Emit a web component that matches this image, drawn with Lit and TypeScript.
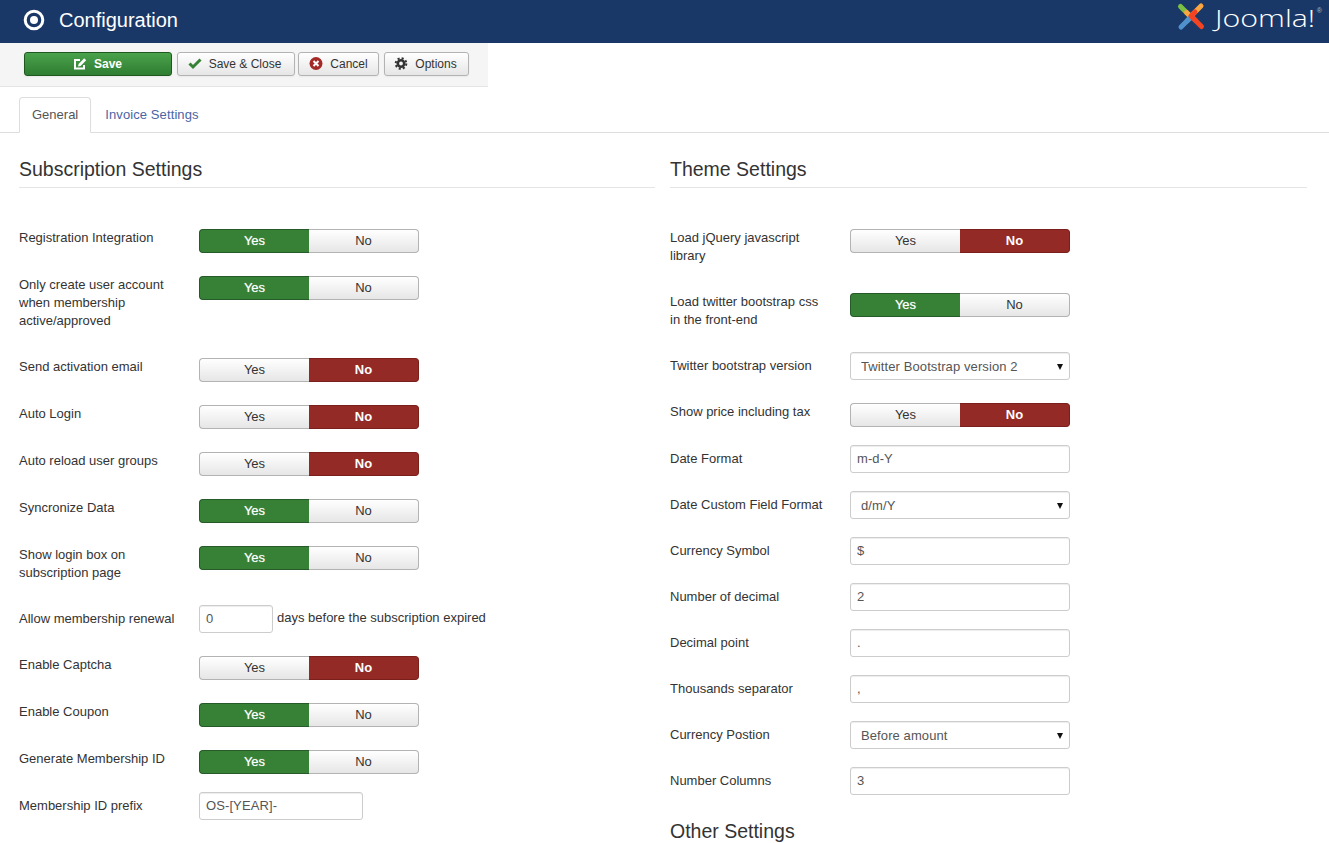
import { LitElement, css, html, nothing } from "lit";
import { customElement } from "lit/decorators.js";

type Row =
  | { label: string; kind: "switch"; on: boolean }
  | { label: string; kind: "input"; value: string; size?: "short" | "mid"; after?: string }
  | { label: string; kind: "select"; value: string };

const LEFT: Row[] = [
  { label: "Registration Integration", kind: "switch", on: true },
  { label: "Only create user account when membership active/approved", kind: "switch", on: true },
  { label: "Send activation email", kind: "switch", on: false },
  { label: "Auto Login", kind: "switch", on: false },
  { label: "Auto reload user groups", kind: "switch", on: false },
  { label: "Syncronize Data", kind: "switch", on: true },
  { label: "Show login box on subscription page", kind: "switch", on: true },
  { label: "Allow membership renewal", kind: "input", value: "0", size: "short", after: "days before the subscription expired" },
  { label: "Enable Captcha", kind: "switch", on: false },
  { label: "Enable Coupon", kind: "switch", on: true },
  { label: "Generate Membership ID", kind: "switch", on: true },
  { label: "Membership ID prefix", kind: "input", value: "OS-[YEAR]-", size: "mid" },
];

const RIGHT: Row[] = [
  { label: "Load jQuery javascript library", kind: "switch", on: false },
  { label: "Load twitter bootstrap css in the front-end", kind: "switch", on: true },
  { label: "Twitter bootstrap version", kind: "select", value: "Twitter Bootstrap version 2" },
  { label: "Show price including tax", kind: "switch", on: false },
  { label: "Date Format", kind: "input", value: "m-d-Y" },
  { label: "Date Custom Field Format", kind: "select", value: "d/m/Y" },
  { label: "Currency Symbol", kind: "input", value: "$" },
  { label: "Number of decimal", kind: "input", value: "2" },
  { label: "Decimal point", kind: "input", value: "." },
  { label: "Thousands separator", kind: "input", value: "," },
  { label: "Currency Postion", kind: "select", value: "Before amount" },
  { label: "Number Columns", kind: "input", value: "3" },
];

@customElement("app-root")
export class AppRoot extends LitElement {
  renderControl(row: Row) {
    if (row.kind === "switch") {
      return html`
        <div class="switch">
          <button class="${row.on ? "yes" : ""}">Yes</button>
          <button class="${row.on ? "" : "no"}">No</button>
        </div>
      `;
    }
    if (row.kind === "select") {
      return html`
        <div class="select">
          <select><option>${row.value}</option></select>
          <span class="arrow"></span>
        </div>
      `;
    }
    return html`
      <input class="${row.size ?? ""}" .value="${row.value}" />
      ${row.after ? html`<span class="after">${row.after}</span>` : nothing}
    `;
  }

  renderRows(rows: Row[]) {
    return rows.map(
      (row) => html`
        <div class="row">
          <label>${row.label}</label>
          <div class="control ${row.kind}-control">${this.renderControl(row)}</div>
        </div>
      `
    );
  }

  render() {
    return html`
      <header>
        <div class="title">
          <svg width="22" height="22" viewBox="0 0 22 22">
            <circle cx="11" cy="11" r="8.8" fill="none" stroke="#fff" stroke-width="3" />
            <circle cx="11" cy="11" r="4" fill="#fff" />
          </svg>
          <h1>Configuration</h1>
        </div>
        <div class="logo">
          <svg width="30" height="31" viewBox="0 0 30 31" fill="none" stroke-width="5" stroke-linecap="round" stroke-linejoin="round">
            <path d="M4.500 5.500L15 16l-4 4" stroke="#7ac143" />
            <path d="M25 5L14.500 15.500l-4-4" stroke="#f9a541" />
            <path d="M5 26l10.500-10.500 4 4" stroke="#5091cd" />
            <path d="M25.500 25.500L15 15l4-4" stroke="#f44321" />
          </svg>
          <span class="wordmark">Joomla!</span><span class="reg">®</span>
        </div>
      </header>

      <div class="toolbar">
        <button class="btn save">
          <svg width="14" height="14" viewBox="0 0 14 14" fill="none">
            <path d="M11 8v3.500H2V3h5" stroke="#fff" stroke-width="2" />
            <path d="M5 9.500l.6-2.600L11.200 1.300l2 2L7.600 8.900z" fill="#fff" />
          </svg>
          Save
        </button>
        <button class="btn close">
          <svg width="14" height="14" viewBox="0 0 14 14" fill="none">
            <path d="M1.500 6.500l3.500 3.500 7.500-7.500" stroke="#378137" stroke-width="3" />
          </svg>
          Save &amp; Close
        </button>
        <button class="btn cancel">
          <svg width="14" height="14" viewBox="0 0 14 14" fill="none">
            <circle cx="7" cy="6.500" r="6.500" fill="#a32a26" />
            <path d="M4.500 4l5 5m0-5l-5 5" stroke="#fff" stroke-width="2" />
          </svg>
          Cancel
        </button>
        <button class="btn options">
          <svg width="14" height="14" viewBox="0 0 14 14" fill="none">
            <circle cx="7" cy="6.500" r="3.200" stroke="#333" stroke-width="2.600" />
            <circle cx="7" cy="6.500" r="5.300" stroke="#333" stroke-width="2" stroke-dasharray="2.100 2.060" />
          </svg>
          Options
        </button>
      </div>

      <nav class="tabs">
        <a class="active">General</a>
        <a>Invoice Settings</a>
      </nav>

      <main>
        <section>
          <h2>Subscription Settings</h2>
          <div class="rows">${this.renderRows(LEFT)}</div>
        </section>
        <section>
          <h2>Theme Settings</h2>
          <div class="rows">${this.renderRows(RIGHT)}</div>
          <h2 class="other">Other Settings</h2>
        </section>
      </main>
    `;
  }

  static styles = css`
    :host {
      display: block;
      height: 843px;
      overflow: hidden;
      background: #fff;
      color: #333;
      font-family: "Liberation Sans", Arial, sans-serif;
      font-size: 13px;
      line-height: 18px;
    }

    header {
      display: flex;
      justify-content: space-between;
      height: 43px;
      background: #1a3867;
    }
    .title {
      display: flex;
      align-items: center;
      gap: 14px;
      padding-left: 23px;
      height: 39px;
    }
    h1 {
      margin: 0;
      color: #fff;
      font-size: 20px;
      font-weight: 400;
    }
    .logo {
      display: flex;
      align-items: flex-start;
      gap: 9px;
      padding: 1px 7px 0 0;
    }
    .wordmark {
      width: 93px;
      margin-top: 2px;
      color: #fff;
      font-family: "Open Sans", sans-serif;
      font-size: 23px;
      font-weight: 300;
      line-height: 30px;
      transform: scaleX(1.32);
      transform-origin: left;
    }
    .reg {
      margin-top: 5px;
      color: #bbb;
      font-size: 7px;
      line-height: 10px;
    }

    .toolbar {
      display: flex;
      gap: 5px;
      box-sizing: border-box;
      width: 488px;
      height: 44px;
      padding: 9px 0 0 24px;
      background: #f5f5f5;
      border-bottom: 1px solid #e5e5e5;
    }
    .btn {
      display: flex;
      align-items: center;
      justify-content: center;
      gap: 7px;
      box-sizing: border-box;
      height: 24px;
      padding: 0;
      border: 1px solid #b3b3b3;
      border-radius: 3px;
      background: linear-gradient(#fff, #e6e6e6);
      box-shadow: 0 1px 2px rgba(0, 0, 0, 0.05);
      color: #333;
      font: inherit;
      font-size: 12px;
    }
    .save {
      width: 148px;
      padding-right: 1px;
      border-color: #1e5a20;
      background: linear-gradient(#4aa24b, #2f7d32);
      color: #fff;
      font-weight: 700;
    }
    .close {
      width: 118px;
      padding-right: 3px;
    }
    .cancel {
      width: 81px;
      margin-left: -2px;
    }
    .options {
      width: 85px;
      padding-right: 2px;
    }

    .tabs {
      display: flex;
      gap: 1px;
      height: 35px;
      margin-top: 10px;
      padding-left: 19px;
      border-bottom: 1px solid #ddd;
    }
    .tabs a {
      box-sizing: border-box;
      height: 35px;
      padding: 8px 12px;
      border: 1px solid transparent;
      border-radius: 4px 4px 0 0;
      color: #4a64a4;
      letter-spacing: 0.1px;
    }
    .tabs a.active {
      height: 36px;
      border-color: #ddd;
      border-bottom-color: #fff;
      background: #fff;
      color: #555;
      letter-spacing: 0;
    }

    main {
      display: grid;
      grid-template-columns: 636px 637px;
      gap: 15px;
      padding: 18px 0 0 19px;
    }
    h2 {
      margin: 0;
      border-bottom: 1px solid #e5e5e5;
      color: #333;
      font-size: 19.500px;
      font-weight: 400;
      line-height: 36px;
    }
    h2.other {
      border: 0;
    }
    .rows {
      padding-top: 36px;
    }
    .row {
      display: flex;
      gap: 20px;
      margin-bottom: 18px;
    }
    label {
      flex: none;
      width: 160px;
      padding: 5px 0;
    }
    .control {
      display: flex;
      align-items: flex-start;
    }
    .switch-control {
      padding-top: 5px;
    }

    .switch {
      display: flex;
      width: 220px;
      height: 24px;
    }
    .switch button {
      flex: 1;
      padding: 0;
      border: 1px solid #b3b3b3;
      background: linear-gradient(#fff, #e6e6e6);
      color: #333;
      font: inherit;
    }
    .switch button:first-child {
      border-radius: 4px 0 0 4px;
      border-right: 0;
    }
    .switch button:last-child {
      border-radius: 0 4px 4px 0;
      border-left: 0;
    }
    .switch button.yes {
      border-color: #265a28;
      background: #378137;
      color: #fff;
      text-shadow: 0 0 1px rgba(255, 255, 255, 0.6);
    }
    .switch button.no {
      border-color: #7a1f1b;
      background: #942a25;
      color: #fff;
      font-weight: 700;
    }

    input,
    select {
      box-sizing: border-box;
      width: 220px;
      height: 28px;
      padding: 3px 6px 5px;
      border: 1px solid #ccc;
      border-radius: 3px;
      background: #fff;
      box-shadow: inset 0 1px 1px rgba(0, 0, 0, 0.075);
      color: #555;
      font: inherit;
      letter-spacing: 0.1px;
      outline: none;
    }
    input.short {
      width: 74px;
    }
    input.mid {
      width: 164px;
    }
    .after {
      margin: 4px 0 0 4px;
      white-space: nowrap;
    }
    .select {
      position: relative;
      width: 220px;
    }
    select {
      appearance: none;
      padding: 5px 6px 3px 10px;
    }
    .arrow {
      position: absolute;
      top: 12px;
      right: 7px;
      border-style: solid;
      border-width: 6px 3px 0;
      border-color: #111 transparent transparent;
    }
  `;
}

declare global {
  interface HTMLElementTagNameMap {
    "app-root": AppRoot;
  }
}
